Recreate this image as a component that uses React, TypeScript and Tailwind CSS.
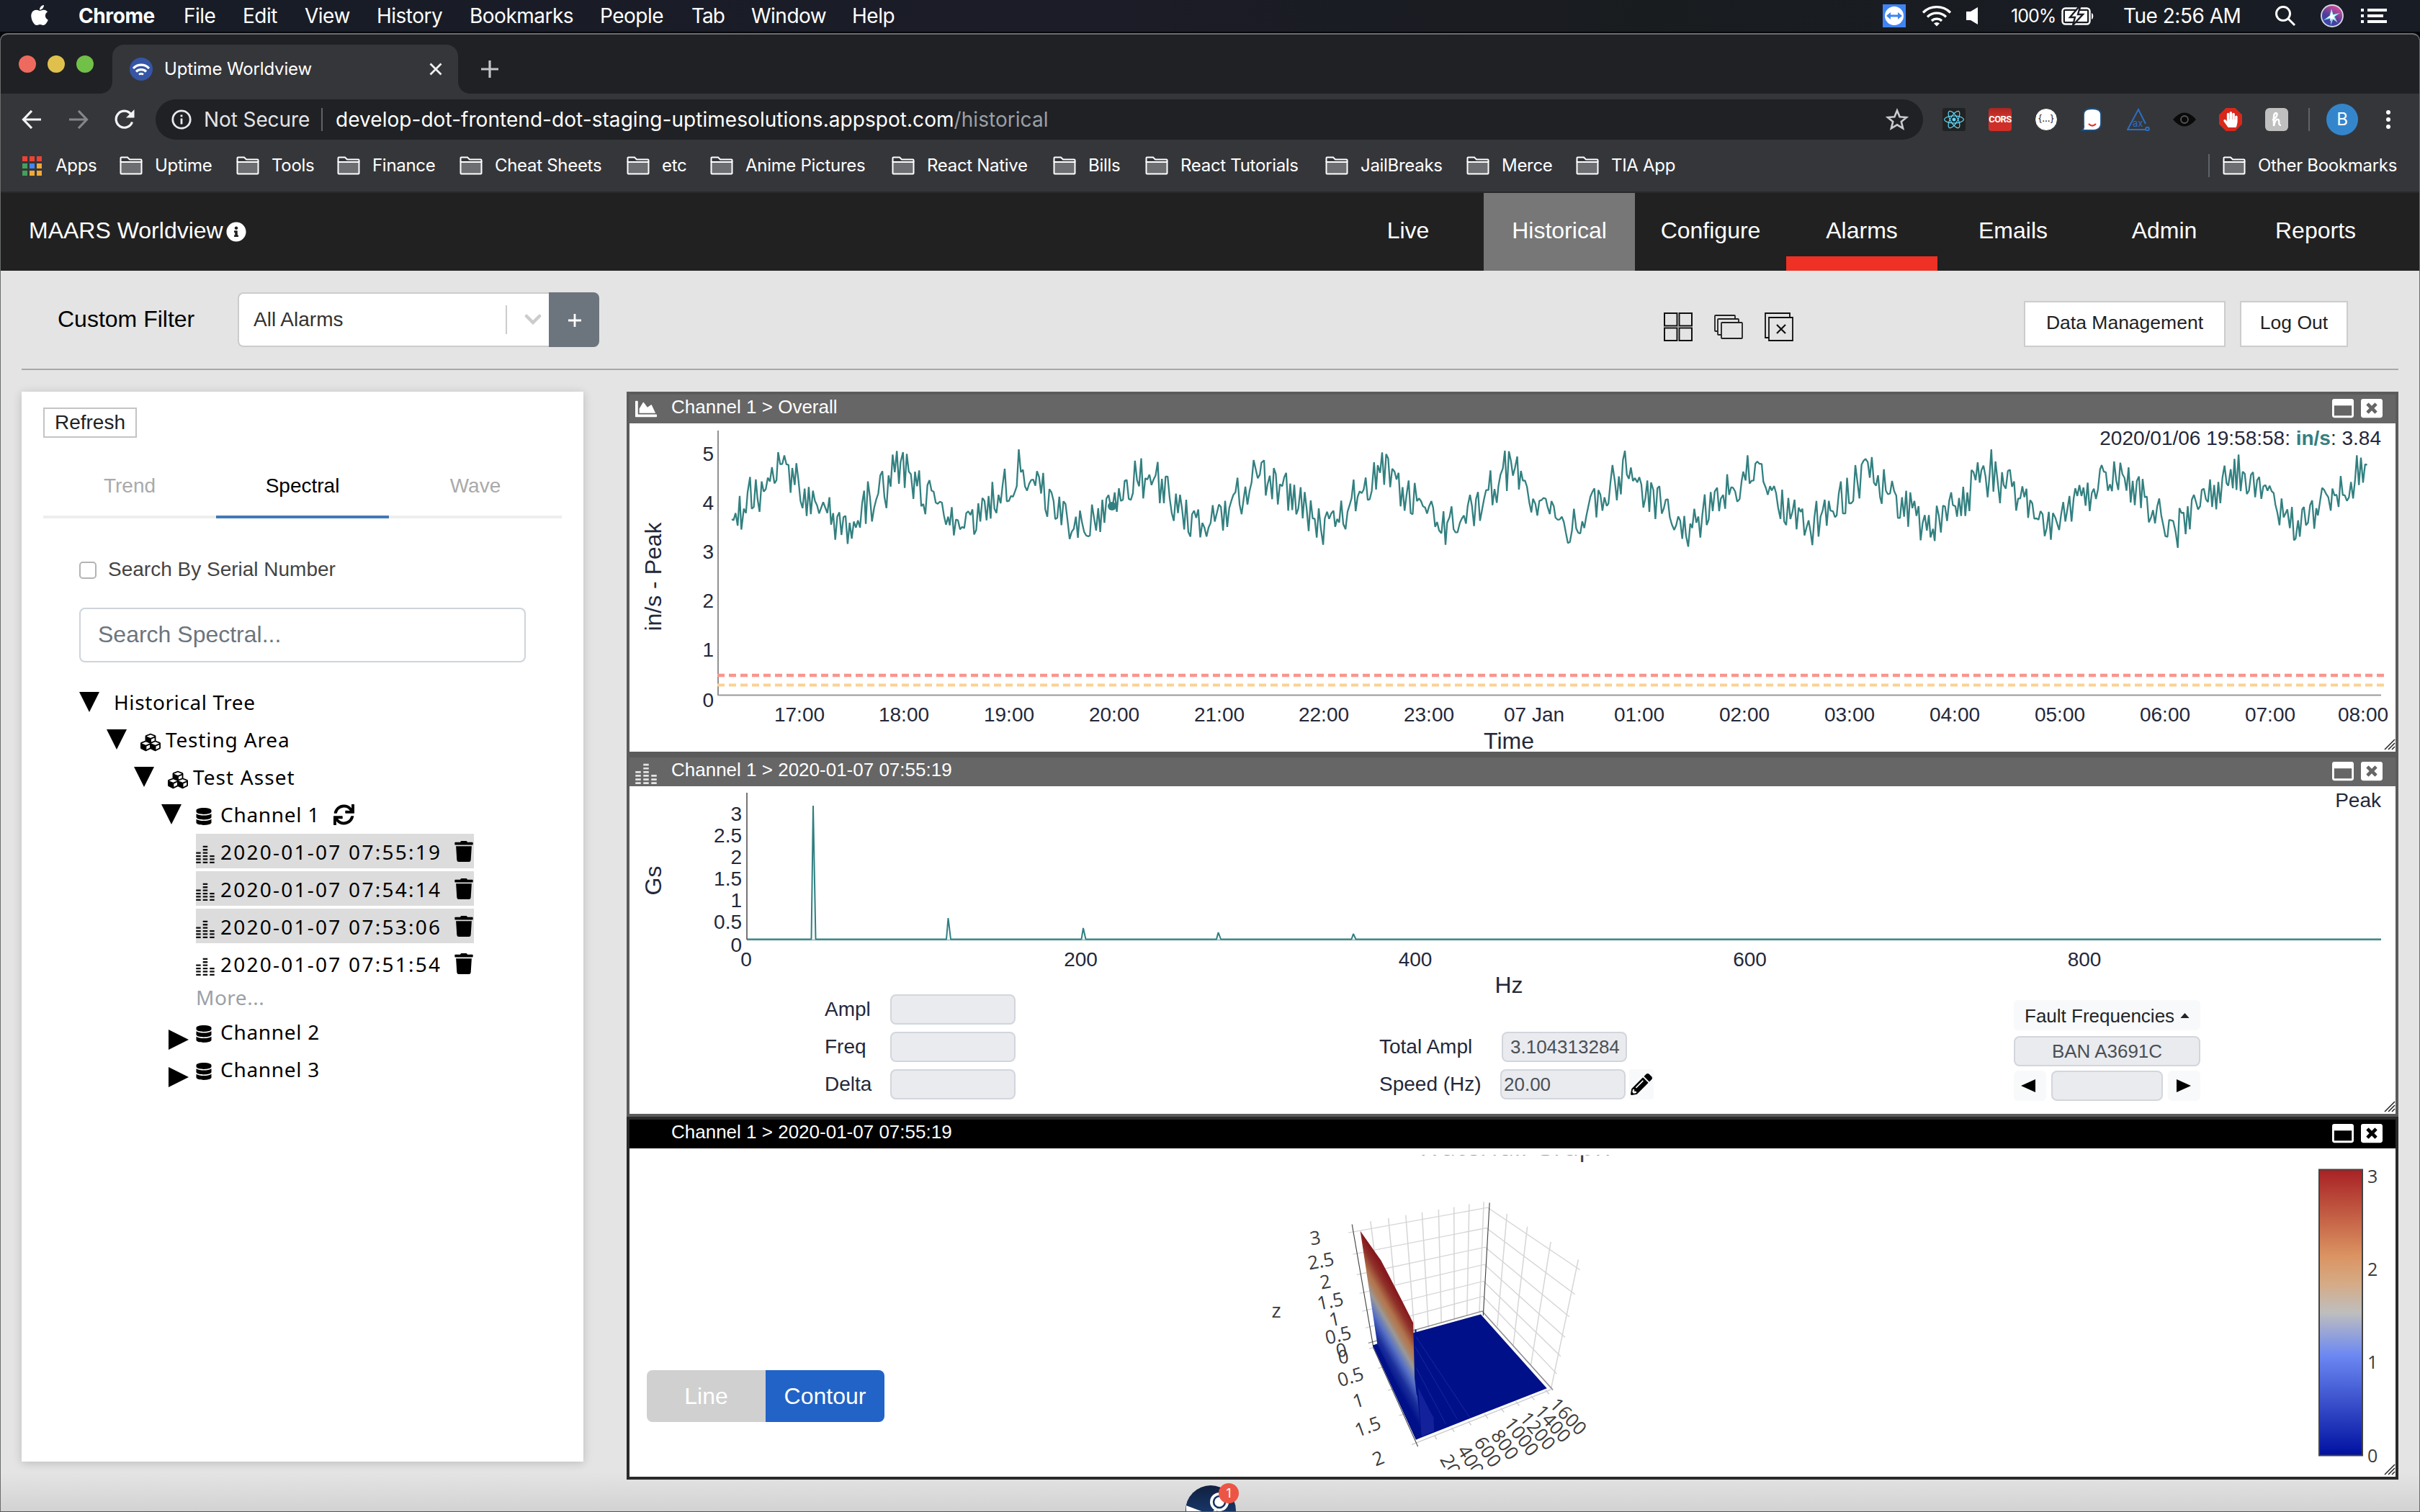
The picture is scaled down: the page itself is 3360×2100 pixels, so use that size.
import React from "react";
import {
  FaApple,
  FaChartArea,
  FaCubes,
  FaDatabase,
  FaHandPaper,
  FaInfoCircle,
  FaPencilAlt,
  FaReact,
  FaRegWindowMaximize,
  FaSync,
  FaTrash,
  FaWindowClose,
} from "react-icons/fa";

/* ---------- data ---------- */

type Batch = { x0: number; y0: number; sx: number; sy: number; raw: string };

const TREND: Batch[] = [
  {
    x0: 860, y0: 530, sx: 1.742, sy: 2.958,
    raw: "272,565 276,570 281,540 286,592 291,470 295,608 301,522 306,540 310,455 316,392 320,522 325,515 330,402 334,480 339,535 344,410 349,452 354,442 359,395 364,410 369,352 375,418 380,405 384,290 389,340 394,338 399,303 404,340 409,342 414,457 418,355 424,425 428,335 433,405 438,490 443,520 448,440 453,552 458,433 463,545 468,448 473,490 478,508 483,542 493,495 503,540 508,475 512,588 517,540 522,650 527,555 532,537 537,630 542,557 547,552 552,667 557,580 562,645 567,575 572,600 577,570 582,600 587,500 592,448 596,585 601,410 606,475 611,575 616,520 621,485 626,460 631,385 636,368 641,475 646,520 651,385 656,432 661,300 666,372 671,285 676,420 680,330 686,290 690,437 695,297 700,370 705,380 711,482 715,370 720,430 725,365 730,512 735,503 740,545 745,425 750,405 755,448 760,452 765,497 770,502 775,493 780,497 785,550 790,588 795,555 799,590 804,516 809,632 814,567 819,570 824,607 829,597 834,602 839,540 844,533 849,548 854,525 858,628 863,610 868,500 873,575 878,478 883,490 888,570 893,470 898,563 902,412 907,522 912,540 917,465 922,500 927,425 932,358 937,492 942,490 947,470 952,473 957,450 961,430 966,278 971,372 976,362 981,430 986,448 991,420 996,404 1001,403 1006,428 1010,368 1015,392 1020,460 1025,375 1030,525 1035,555 1040,442 1045,455 1050,490 1054,565 1059,560 1064,473 1069,590 1074,492 1079,503 1084,572 1089,647 1094,617 1099,605 1104,555 1109,642 1114,530 1119,580 1124,617 1129,632 1134,636 1138,632 1143,505 1148,560 1153,612 1158,520 1163,618 1168,485 1173,580 1178,480 1183,466 1188,510 1193,512 1198,455 1203,535 1208,438 1213,490 1218,485 1222,408 1227,404 1232,482 1237,486 1242,458 1247,325 1252,405 1257,430 1262,315 1267,480 1272,397 1277,402 1282,382 1287,425 1292,402 1297,385 1302,330 1307,500 1312,400 1317,500 1321,390 1326,390 1331,480 1336,540 1341,572 1346,460 1351,540 1356,465 1361,525 1366,608 1371,485 1376,618 1381,637 1385,545 1390,530 1395,560 1400,525 1405,640 1410,580 1415,600 1420,637 1425,600 1430,580 1435,508 1440,575 1445,540 1450,505 1455,515 1460,612 1465,490 1470,597 1475,520 1480,490 1485,465 1490,455 1495,395 1500,505 1505,545 1510,480 1514,432 1519,505 1524,450 1529,415 1534,322 1539,360 1544,397 1549,382",
  },
  {
    x0: 1750, y0: 590, sx: 2.148, sy: 3,
    raw: "3,158 11,148 16,295 21,250 28,212 35,310 40,180 46,205 52,332 58,248 65,256 71,218 77,200 83,358 89,245 95,355 101,250 107,373 113,350 120,260 126,390 132,280 138,350 144,443 150,315 156,390 162,391 168,470 174,348 180,430 187,500 192,390 199,362 205,392 211,370 218,358 223,425 229,392 235,407 241,316 247,413 254,435 260,362 266,335 272,305 278,228 284,360 290,300 296,277 302,285 308,270 314,220 320,313 326,310 332,275 339,156 345,270 350,168 357,200 363,115 369,250 375,122 381,140 387,260 393,183 400,195 406,228 412,200 418,340 424,260 430,358 436,290 442,232 448,368 454,373 460,242 467,318 473,307 479,318 485,340 491,344 497,370 503,340 510,318 515,345 521,425 527,405 533,440 540,452 546,360 552,500 557,408 564,385 570,340 576,435 582,448 588,448 595,408 601,390 607,378 613,412 618,340 625,292 631,340 637,422 643,310 649,280 655,400 661,355 667,310 673,272 680,272 686,190 692,335 698,268 705,325 710,255 716,208 723,182 729,108 735,276 741,110 747,150 753,212 759,180 766,132 771,270 777,192 783,233 789,232 795,258 802,325 808,365 813,308 820,330 826,378 832,317 838,314 844,305 851,308 856,340 863,372 868,318 875,340 880,387 887,396 893,394 899,383 905,405 911,450 917,493 923,488 929,442 935,350 942,432 948,450 954,453 960,402 966,430 972,380 978,340 984,300 990,280 996,265 1002,386 1008,272 1014,292 1020,358 1026,302 1033,338 1038,328 1044,240 1050,168 1057,235 1063,315 1069,215 1075,290 1081,148 1087,108 1093,208 1099,225 1105,178 1111,234 1117,222 1124,240 1130,218 1136,248 1142,345 1148,305 1154,232 1160,363 1165,240 1172,272 1178,393 1184,264 1190,256 1197,370 1203,348 1209,312 1215,310 1221,385 1227,415 1234,438 1240,418 1246,382 1252,400 1258,475 1264,380 1269,460 1276,508 1282,412 1288,430 1294,350 1300,408 1306,382 1312,470 1318,375 1325,290 1331,418 1337,395 1343,280 1349,360 1355,278 1362,262 1368,360 1373,308 1380,292 1386,350 1392,206 1398,292 1404,260 1410,263 1416,278 1422,320 1429,310 1435,235 1440,195 1447,232 1453,127 1459,245 1465,233 1471,232 1476,162 1482,153 1488,162 1495,163 1500,237 1508,265 1513,292 1520,256 1525,274 1532,255 1538,285 1544,345 1551,392 1556,270 1562,403 1568,418",
  },
  {
    x0: 2460, y0: 530, sx: 1.742, sy: 2.958,
    raw: "40,478 45,565 50,535 55,485 60,607 65,518 70,535 74,522 79,632 84,600 89,570 94,620 98,672 103,560 108,490 113,637 118,555 123,530 128,485 133,592 138,490 142,530 148,533 153,557 157,550 162,460 167,410 172,542 178,542 182,395 187,500 192,500 197,490 202,343 207,410 212,480 217,342 222,325 227,318 232,330 237,395 242,310 247,415 252,428 257,385 262,475 266,502 271,360 276,448 281,463 286,460 291,408 296,450 301,468 305,560 310,560 315,475 320,555 325,448 330,597 335,455 340,520 345,490 350,552 355,512 360,652 365,580 370,548 375,612 380,548 384,640 390,605 394,655 399,510 404,550 409,620 414,510 419,513 424,573 429,490 434,455 438,507 444,512 448,555 453,478 458,552 463,432 468,552 473,455 478,532 483,363 488,372 493,405 498,332 503,415 507,365 512,345 517,390 522,475 527,380 531,278 536,452 541,328 547,420 552,500 557,372 561,425 566,440 571,367 576,362 581,432 586,410 591,530 596,480 601,480 606,430 611,475 616,440 620,560 625,487 630,500 635,563 641,562 645,568 650,532 655,545 660,635 665,602 670,535 675,650 680,540 686,560 695,610 700,545 705,495 710,575 715,525 720,470 725,575 730,480 734,438 739,470 744,425 749,470 754,435 759,510 764,415 769,532 774,458 779,440 784,482 789,442 794,360 798,343 803,370 808,372 813,448 818,422 823,450 828,328 833,405 838,445 843,333 848,380 853,395 858,448 863,352 868,497 873,408 878,508 883,408 888,390 893,520 897,400 902,475 907,472 912,578 917,560 922,528 927,582 932,515 937,480 942,550 947,590 952,635 957,638 961,568 966,570 971,573 977,620 982,683 986,520 991,540 996,538 1001,627 1006,512 1011,607 1016,485 1021,465 1026,495 1031,525 1036,512 1040,445 1045,440 1050,483 1055,495 1060,402 1065,515 1070,425 1075,525 1080,412 1085,500 1090,395 1095,345 1100,418 1104,428 1110,360 1115,438 1119,317 1124,445 1129,300 1134,450 1139,370 1144,378 1149,462 1154,448 1159,383 1164,372 1169,475 1174,405 1179,392 1184,482 1189,430 1194,425 1199,448 1204,428 1209,450 1214,458 1218,505 1223,540 1228,590 1233,480 1238,558 1243,540 1247,525 1253,602 1258,515 1263,652 1267,645 1273,570 1277,637 1283,525 1287,515 1292,590 1297,580 1302,508 1307,488 1312,605 1317,520 1321,550 1327,480 1331,437 1336,445 1341,462 1346,475 1352,530 1356,440 1361,468 1366,465 1371,515 1376,388 1381,466 1386,467 1391,490 1396,475 1401,412 1406,480 1411,400 1415,303 1420,425 1425,312 1430,415 1435,340 1440,342",
  },
];

const trendPoints = TREND.map((b) =>
  b.raw
    .split(" ")
    .map((p) => {
      const [x, y] = p.split(",").map(Number);
      return `${(b.x0 + x / b.sx).toFixed(1)},${(b.y0 + y / b.sy).toFixed(1)}`;
    })
    .join(" "),
).join(" ");

const TIME_TICKS: [string, number][] = [
  ["17:00", 1110], ["18:00", 1255], ["19:00", 1401], ["20:00", 1547], ["21:00", 1693],
  ["22:00", 1838], ["23:00", 1984], ["07 Jan", 2130], ["01:00", 2276], ["02:00", 2422],
  ["03:00", 2568], ["04:00", 2714], ["05:00", 2860], ["06:00", 3006], ["07:00", 3152], ["08:00", 3281],
];

const FONT = "'Liberation Sans', Arial, sans-serif";
const PLOT_FONT = "'Open Sans', sans-serif";

/* ---------- macOS menu bar ---------- */

function MenuBar() {
  return (
    <div className="flex h-[46px] shrink-0 items-start border-b-2 border-[#05070b] bg-[linear-gradient(90deg,#171c26_0%,#1b1c27_45%,#191c1f_68%,#181c25_100%)] pl-[40px] text-[28px] leading-[44px] tracking-[-0.5px] text-white">
      <div className="flex h-[44px] w-[69px] items-center">
        <FaApple className="mb-[3px] h-[32px] w-[32px] -translate-x-[1px]" />
      </div>
      <div className="w-[146px] font-bold tracking-[-0.4px]">Chrome</div>
      <div className="w-[82px]">File</div>
      <div className="w-[86px]">Edit</div>
      <div className="w-[100px]">View</div>
      <div className="w-[129px]">History</div>
      <div className="w-[181px]">Bookmarks</div>
      <div className="w-[127px]">People</div>
      <div className="w-[83px] tracking-[-1px]">Tab</div>
      <div className="w-[140px]">Window</div>
      <div className="w-[100px]">Help</div>
      <div className="ml-auto flex h-[44px] items-center pr-[46px]">
        <svg width="32" height="32" viewBox="0 0 32 32">
          <rect width="32" height="32" fill="#3f84f3" />
          <circle cx="16" cy="16" r="13" fill="#fff" />
          <path d="M5 16l6-5v3.500h10V11l6 5-6 5v-3.500H11V21z" fill="#3f84f3" />
        </svg>
        <svg className="ml-[22px]" width="42" height="32" viewBox="0 0 42 32" fill="none" stroke="#fff" strokeWidth="3.200">
          <path d="M2 11.500a27 27 0 0 1 38 0M8 17.500a18.500 18.500 0 0 1 26 0M14 23a10 10 0 0 1 14 0" />
          <path d="M17 26.500a6 6 0 0 1 8 0l-4 4z" fill="#fff" stroke="none" />
        </svg>
        <svg className="ml-[20px]" width="17" height="24" viewBox="0 0 17 24" fill="#fff">
          <path d="M0 6h6l10-6v24l-10-6H0z" />
        </svg>
        <div className="ml-[45px] w-[70px] text-[25px] tracking-[-1px]">100%</div>
        <svg width="46" height="25" viewBox="0 0 46 25" fill="none">
          <rect x="1.500" y="1.500" width="38" height="22" rx="4" stroke="#fff" strokeWidth="2.400" />
          <rect x="5" y="5" width="31" height="15" fill="#fff" />
          <path d="M24 0L12 14h7l-3 11 14-15h-7l3-10z" fill="#fff" stroke="#191c24" strokeWidth="2.400" />
          <path d="M42 8c3 1 3 8 0 9z" fill="#fff" />
        </svg>
        <div className="ml-[40px] w-[210px] tracking-[-0.5px]">Tue 2:56 AM</div>
        <svg width="30" height="30" viewBox="0 0 30 30" fill="none" stroke="#fff" strokeWidth="3">
          <circle cx="12" cy="12" r="9.500" />
          <path d="M19 19l9 9" />
        </svg>
        <svg className="ml-[34px]" width="32" height="32" viewBox="0 0 32 32">
          <defs>
            <linearGradient id="siri" x1="0" y1="1" x2="0.600" y2="0">
              <stop offset="0" stopColor="#2a4fb8" />
              <stop offset="0.500" stopColor="#4c3d9b" />
              <stop offset="1" stopColor="#d64b9a" />
            </linearGradient>
          </defs>
          <circle cx="16" cy="16" r="15" fill="url(#siri)" stroke="#d5d8e0" strokeWidth="1.800" />
          <path d="M15 6l2.500 8L27 12l-7.500 5 4 8.500-6-5L14 29l.5-9.500L4 22l8.500-6z" fill="#8fe6ec" />
          <path d="M15 10l2 5 5-.5-4 3 2 5-4-3-3 4 .5-5-5 .5 5-3.500z" fill="#fff" />
        </svg>
        <svg className="ml-[24px]" width="36" height="22" viewBox="0 0 36 22" fill="#fff">
          <path d="M0 1h4v4H0zM9 1h27v4H9zM0 9h4v4H0zM9 9h22v4H9zM0 17h4v4H0zM9 17h27v4H9z" />
        </svg>
      </div>
    </div>
  );
}

/* ---------- Chrome ---------- */

function TabStrip() {
  return (
    <div className="flex h-[82px] shrink-0 items-end bg-[#202124]">
      <div className="mb-[29px] flex w-[140px] gap-[16px] pl-[26px]">
        <div className="h-6 w-6 rounded-full bg-[#ee6a5f]" />
        <div className="h-6 w-6 rounded-full bg-[#e0c04c]" />
        <div className="h-6 w-6 rounded-full bg-[#71c048]" />
      </div>
      <div className="h-4 w-4 bg-[radial-gradient(circle_at_0_0,transparent_15.500px,#35363a_16px)]" />
      <div className="flex h-[68px] w-[480px] items-center rounded-t-[16px] bg-[#35363a] pr-[22px] pl-[24px]">
        <svg width="32" height="32" viewBox="0 0 32 32" fill="none" stroke="#fff" strokeWidth="3.200">
          <circle cx="16" cy="16" r="16" fill="#3656a5" stroke="none" />
          <path d="M5 15a15 15 0 0 1 22 0M9 19.500a10 10 0 0 1 14 0" />
          <path d="M13 23.500a5 5 0 0 1 6 0" strokeWidth="2.600" />
        </svg>
        <div className="ml-4 flex-1 text-[24px] tracking-[-0.15px] text-white">Uptime Worldview</div>
        <svg width="18" height="18" viewBox="0 0 18 18" stroke="#f1f1f1" strokeWidth="2.800">
          <path d="M1.500 1.500l15 15M16.500 1.500l-15 15" />
        </svg>
      </div>
      <div className="h-4 w-4 bg-[radial-gradient(circle_at_100%_0,transparent_15.500px,#35363a_16px)]" />
      <svg className="mb-[22px] ml-4" width="24" height="24" viewBox="0 0 24 24" stroke="#c4c5c9" strokeWidth="3.200">
        <path d="M12 0v24M0 12h24" />
      </svg>
    </div>
  );
}

function Toolbar() {
  return (
    <div className="flex h-[72px] shrink-0 items-center bg-[#35363a]">
      <svg className="ml-[30px]" width="28" height="26" viewBox="0 0 28 26" fill="none" stroke="#f1f3f4" strokeWidth="3.200">
        <path d="M27 13H3M14 1L2.500 13 14 25" />
      </svg>
      <svg className="ml-[37px]" width="28" height="26" viewBox="0 0 28 26" fill="none" stroke="#85868a" strokeWidth="3.200">
        <path d="M1 13h24M14 1l11.500 12L14 25" />
      </svg>
      <svg className="ml-[36px]" width="28" height="28" viewBox="0 0 28 28" fill="none" stroke="#f1f3f4" strokeWidth="3.200">
        <path d="M24.500 17.500A11.500 11.500 0 1 1 23 7" />
        <path d="M27.500 0v11.500H16z" fill="#f1f3f4" stroke="none" />
      </svg>
      <div className="ml-[29px] flex h-[56px] w-[2454px] items-center rounded-full bg-[#202124] pr-[20px] pl-[22px] text-[28px]">
        <svg width="28" height="28" viewBox="0 0 28 28" fill="none" stroke="#e8eaed" strokeWidth="2.800">
          <circle cx="14" cy="14" r="12.200" />
          <path d="M14 12.500v8M14 7.500v2.800" />
        </svg>
        <div className="ml-[17px] w-[163px] tracking-[-0.1px] whitespace-nowrap text-[#e3e5e8]">Not Secure</div>
        <div className="mr-[18px] h-8 w-[2px] bg-[#5f6368]" />
        <div className="tracking-[0.05px] whitespace-nowrap text-white">
          develop-dot-frontend-dot-staging-uptimesolutions.appspot.com<span className="text-[#9aa0a6]">/historical</span>
        </div>
        <svg className="ml-auto" width="32" height="32" viewBox="0 0 32 32" fill="none" stroke="#c9cbce" strokeWidth="2.600">
          <path d="M16 3.500l3.600 8.800 9.500.700-7.300 6.100 2.300 9.200L16 23.300l-8.100 5 2.300-9.200L2.900 13l9.500-.700z" />
        </svg>
      </div>
      <div className="ml-[27px] flex h-8 w-8 items-center justify-center rounded-[3px] bg-[#222]">
        <FaReact className="h-[28px] w-[28px] text-[#61dafb]" />
      </div>
      <div className="ml-8 flex h-8 w-8 items-center justify-center rounded-[4px] bg-[linear-gradient(180deg,#a82723_0%,#cf2f28_35%,#cf2f28_100%)] font-[Roboto] text-[13px] font-bold tracking-[-0.6px] text-white">CORS</div>
      <div className="ml-8 flex h-8 w-8 items-center justify-center rounded-full border border-[#222] bg-white pb-[2px] text-[13px] text-[#222]">{"{...}"}</div>
      <svg className="ml-8" width="32" height="32" viewBox="0 0 32 32">
        <path d="M4 9q0-8 12-8t12 8v12q0 10-12 10H2q3-3 2-7z" fill="#fff" stroke="#1c4f82" strokeWidth="1.800" />
        <path d="M11 22q5 5 10 0" stroke="#d8352a" strokeWidth="2.200" fill="none" />
      </svg>
      <svg className="ml-8" width="32" height="32" viewBox="0 0 32 32" fill="none" stroke="#2b6fc2" strokeWidth="2">
        <path d="M26 22L16 2 1 30h25" />
        <circle cx="28.500" cy="29" r="2.300" />
        <text x="8" y="25.500" fontSize="13" fill="#2b6fc2" stroke="none">ax</text>
      </svg>
      <svg className="ml-8" width="32" height="20" viewBox="0 0 32 20">
        <path d="M0 10Q16-9 32 10 16 29 0 10z" fill="#0a0a0a" />
        <circle cx="16" cy="10" r="5" fill="none" stroke="#55565a" strokeWidth="1.800" />
      </svg>
      <div className="ml-8 flex h-8 w-8 items-center justify-center bg-[#d8281c] [clip-path:polygon(30%_0,70%_0,100%_30%,100%_70%,70%_100%,30%_100%,0_70%,0_30%)]">
        <FaHandPaper className="h-[22px] w-[22px] text-white" />
      </div>
      <svg className="ml-8" width="32" height="32" viewBox="0 0 32 32">
        <rect width="32" height="32" rx="6" fill="#bfbfc0" />
        <path d="M10 17c7-4 8-10 5-10-4 0-3 8-3 18 1-7 4-10 6-9 3 1-1 8 4 8" fill="none" stroke="#fff" strokeWidth="2.400" />
      </svg>
      <div className="ml-[28px] h-8 w-[2px] bg-[#5f6368]" />
      <div className="ml-[23px] flex h-[44px] w-[44px] items-center justify-center rounded-full bg-[#3486cc] text-[24px] text-white">B</div>
      <div className="ml-[39px] flex flex-col gap-[4px]">
        <div className="h-[6px] w-[6px] rounded-full bg-white" />
        <div className="h-[6px] w-[6px] rounded-full bg-white" />
        <div className="h-[6px] w-[6px] rounded-full bg-white" />
      </div>
    </div>
  );
}

function Folder() {
  return (
    <svg className="mr-[17px] shrink-0" width="32" height="26" viewBox="0 0 32 26" fill="none" stroke="#fff" strokeWidth="2">
      <path d="M1.500 8h29v15.500q0 1-1 1h-27q-1 0-1-1z" fill="#6d6e71" />
      <path d="M1.500 8V2.500q0-1 1-1h8.500l3 3h15.500q1 0 1 1V8" />
    </svg>
  );
}

function Bookmark({ label, width }: { label: string; width: string }) {
  return (
    <div className={`flex shrink-0 items-center whitespace-nowrap ${width}`}>
      <Folder />
      {label}
    </div>
  );
}

function BookmarksBar() {
  return (
    <div className="flex h-[66px] shrink-0 items-center border-b-2 border-[#28292b] bg-[#35363a] pb-2 text-[24px] tracking-[-0.3px] text-white">
      <div className="ml-[31px] grid w-[46px] grid-cols-[7px_7px_7px] gap-[3px]">
        <div className="h-[7px] bg-[#ea4335]" />
        <div className="h-[7px] bg-[#ea4335]" />
        <div className="h-[7px] bg-[#ea4335]" />
        <div className="h-[7px] bg-[#43a05a]" />
        <div className="h-[7px] bg-[#4285f4]" />
        <div className="h-[7px] bg-[#f0a934]" />
        <div className="h-[7px] bg-[#43a05a]" />
        <div className="h-[7px] bg-[#f0a934]" />
        <div className="h-[7px] bg-[#f0a934]" />
      </div>
      <div className="w-[89px]">Apps</div>
      <Bookmark label="Uptime" width="w-[162px]" />
      <Bookmark label="Tools" width="w-[140px]" />
      <Bookmark label="Finance" width="w-[170px]" />
      <Bookmark label="Cheat Sheets" width="w-[232px]" />
      <Bookmark label="etc" width="w-[116px]" />
      <Bookmark label="Anime Pictures" width="w-[252px]" />
      <Bookmark label="React Native" width="w-[224px]" />
      <Bookmark label="Bills" width="w-[128px]" />
      <Bookmark label="React Tutorials" width="w-[250px]" />
      <Bookmark label="JailBreaks" width="w-[196px]" />
      <Bookmark label="Merce" width="w-[152px]" />
      <Bookmark label="TIA App" width="w-[160px]" />
      <div className="ml-auto h-8 w-[2px] bg-[#5f6368]" />
      <div className="ml-[18px]">
        <Bookmark label="Other Bookmarks" width="w-[274px]" />
      </div>
    </div>
  );
}

/* ---------- App header and filter row ---------- */

function Header() {
  const cell = "flex h-full w-[210px] items-center justify-center pb-[4px]";
  return (
    <div className="flex h-[108px] shrink-0 items-center bg-[#212121] pr-[40px] pl-[40px] text-[32px] text-white">
      <div className="flex items-center pb-[4px]">
        MAARS Worldview
        <FaInfoCircle className="mt-[3px] ml-[4px] h-[28px] w-[28px]" />
      </div>
      <div className="ml-auto flex h-full">
        <div className={cell}>Live</div>
        <div className={`${cell} bg-[#777]`}>Historical</div>
        <div className={cell}>Configure</div>
        <div className="flex h-full w-[210px] items-center justify-center border-b-[20px] border-[#ee3124] pt-[16px]">Alarms</div>
        <div className={cell}>Emails</div>
        <div className={cell}>Admin</div>
        <div className={cell}>Reports</div>
      </div>
    </div>
  );
}

function FilterBar() {
  return (
    <div className="mx-[30px] flex h-[138px] shrink-0 items-start border-b-2 border-[#a8a8a8] pt-[30px]">
      <div className="w-[250px] pl-[50px] text-[32px] leading-[74px] whitespace-nowrap text-black">Custom Filter</div>
      <div className="ml-[50px] flex h-[76px] w-[432px] items-center rounded-l-[8px] border-2 border-r-0 border-[#ccc] bg-white">
        <div className="flex-1 pl-[20px] text-[28px] text-[#333]">All Alarms</div>
        <div className="h-[40px] w-[2px] bg-[#ccc]" />
        <svg className="mr-[10px] ml-[24px]" width="24" height="16" viewBox="0 0 24 16" fill="none" stroke="#ccc" strokeWidth="4.500" strokeLinecap="round">
          <path d="M3 3l9 9 9-9" />
        </svg>
      </div>
      <div className="flex h-[76px] w-[70px] items-center justify-center rounded-r-[8px] bg-[#6c757d] text-white">
        <svg className="mt-[2px] ml-[2px]" width="18" height="18" viewBox="0 0 18 18" stroke="#fff" strokeWidth="2.800">
          <path d="M9 0v18M0 9h18" />
        </svg>
      </div>
      <div className="mt-[28px] ml-auto flex items-start gap-[30px]">
        <svg width="40" height="40" viewBox="0 0 40 40" fill="none" stroke="#111" strokeWidth="2">
          <path d="M1 1h17.500v17.500H1zM21.500 1H39v17.500H21.500zM1 21.500h17.500V39H1zM21.500 21.500H39V39H21.500z" />
          <path d="M0 20h40M20 0v40" stroke="#999" strokeWidth="1" />
        </svg>
        <svg className="mt-[3px]" width="40" height="34" viewBox="0 0 40 34" fill="#e4e4e4" stroke="#222" strokeWidth="1.800">
          <rect x="1" y="1" width="28" height="22" rx="1" />
          <rect x="5" y="6" width="29" height="22" rx="1" />
          <rect x="10" y="11" width="29" height="22" rx="1" />
        </svg>
        <svg width="40" height="40" viewBox="0 0 40 40" fill="#e4e4e4" stroke="#111" strokeWidth="1.800">
          <path d="M1 1h34v34H1z" />
          <path d="M6 7h33v32H6z" />
          <path d="M17 17l12 12M29 17l-12 12" strokeWidth="2.200" />
        </svg>
      </div>
      <div className="mt-[12px] ml-[320px] flex h-[64px] w-[280px] items-center justify-center border-2 border-[#ccc] bg-white pb-[3px] text-[26.500px] text-[#222]">Data Management</div>
      <div className="mt-[12px] mr-[70px] ml-[20px] flex h-[64px] w-[150px] items-center justify-center border-2 border-[#ccc] bg-white pb-[3px] text-[26.500px] text-[#222]">Log Out</div>
    </div>
  );
}

/* ---------- Sidebar ---------- */

function SpectrumBars({ className, color }: { className: string; color: string }) {
  return (
    <svg className={className} viewBox="0 0 30 29" fill="none" stroke={color} strokeWidth="7.500">
      <path d="M4 29V10M15 29V0M26 29V15" strokeDasharray="2.700 2.400" />
    </svg>
  );
}

function Down() {
  return (
    <svg width="28" height="28" viewBox="0 0 28 28">
      <path d="M0 0h28L14 28z" />
    </svg>
  );
}

function Leaf({ label, selected }: { label: string; selected?: boolean }) {
  return (
    <div className={`mb-[4px] ml-[242px] flex h-[48px] w-[386px] items-center ${selected ? "bg-[#dcdcdc]" : ""}`}>
      <SpectrumBars className="mt-[8px] h-[25px] w-[26px]" color="#111" />
      <div className="mt-[2px] ml-[8px] w-[325px] text-[28px] tracking-[2.25px] whitespace-nowrap">{label}</div>
      <FaTrash className="h-[29px] w-[28px] shrink-0" />
    </div>
  );
}

function Closed({ label }: { label: string }) {
  return (
    <div className="flex h-[52px] items-center pl-[204px]">
      <svg className="mt-[20px]" width="28" height="28" viewBox="0 0 28 28">
        <path d="M0 0v28l28-14z" />
      </svg>
      <FaDatabase className="mt-[3px] ml-[9px] h-[24px] w-[24px]" />
      <div className="-mt-[3px] ml-[11px] tracking-[0.7px]">{label}</div>
    </div>
  );
}

function Sidebar() {
  return (
    <div className="flex h-[1486px] w-[780px] shrink-0 flex-col bg-white shadow-[0_2px_12px_rgba(0,0,0,0.18)]">
      <div className="mt-[22px] ml-[30px] flex h-[42px] w-[130px] items-center justify-center border-2 border-[#c4c4c4] text-[28px] text-[#222]">Refresh</div>
      <div className="mx-[30px] mt-[24px] flex h-[88px] text-[28px]">
        <div className="w-[240px] border-b-4 border-[#eee] pt-[22px] text-center text-[#aaa]">Trend</div>
        <div className="w-[240px] border-b-4 border-[#4379b5] pt-[22px] text-center text-black">Spectral</div>
        <div className="w-[240px] border-b-4 border-[#eee] pt-[22px] text-center text-[#aaa]">Wave</div>
      </div>
      <div className="mt-[50px] ml-[80px] flex h-[44px] items-center text-[28px] text-[#444]">
        <div className="h-[24px] w-[24px] rounded-[5px] border-2 border-[#b3b3b3] bg-white" />
        <div className="mb-[2px] ml-[16px]">Search By Serial Number</div>
      </div>
      <div className="mt-[30px] ml-[80px] flex h-[76px] w-[620px] items-center rounded-[8px] border-2 border-[#ced4da] pb-[2px] pl-[24px] text-[32px] text-[#6c757d]">Search Spectral...</div>
      <div className="mt-[29px] font-['Noto_Sans'] text-[28px] whitespace-nowrap text-black">
        <div className="flex h-[52px] items-center pl-[80px]">
          <Down />
          <div className="ml-[20px] tracking-[0.6px]">Historical Tree</div>
        </div>
        <div className="flex h-[52px] items-center pl-[118px]">
          <Down />
          <FaCubes className="mt-[7px] ml-[19px] h-[28px] w-[28px]" />
          <div className="ml-[7px] tracking-[0.85px]">Testing Area</div>
        </div>
        <div className="flex h-[52px] items-center pl-[156px]">
          <Down />
          <FaCubes className="mt-[7px] ml-[19px] h-[28px] w-[28px]" />
          <div className="ml-[7px] tracking-[1.1px]">Test Asset</div>
        </div>
        <div className="mb-[1px] flex h-[52px] items-center pl-[194px]">
          <Down />
          <FaDatabase className="mt-[6px] ml-[19px] h-[24px] w-[24px]" />
          <div className="ml-[11px] w-[157px] tracking-[0.7px]">Channel 1</div>
          <FaSync className="h-[29px] w-[29px]" />
        </div>
        <Leaf label="2020-01-07 07:55:19" selected />
        <Leaf label="2020-01-07 07:54:14" selected />
        <Leaf label="2020-01-07 07:53:06" selected />
        <Leaf label="2020-01-07 07:51:54" />
        <div className="flex h-[42px] items-center pb-[4px] pl-[242px] tracking-[0.5px] text-[#9aa1a8]">More...</div>
        <Closed label="Channel 2" />
        <Closed label="Channel 3" />
      </div>
    </div>
  );
}

/* ---------- Panels ---------- */

function Panel({ title, icon, tone, children }: { title: string; icon?: React.ReactNode; tone: "gray" | "black"; children: React.ReactNode }) {
  const black = tone === "black";
  return (
    <div className={`flex h-[503.500px] w-full flex-col border-4 bg-white ${black ? "border-[#2a2a2a]" : "border-[#5b5b5b]"}`}>
      <div className={`flex h-[40px] shrink-0 items-center pr-[18px] text-[26px] text-white ${black ? "bg-black" : "bg-[#666]"}`}>
        <div className="flex h-full w-[58px] items-center pl-[8px]">{icon}</div>
        <div className="flex-1 pb-[5px] whitespace-nowrap">{title}</div>
        <FaRegWindowMaximize className="mr-[10px] mb-[2px] h-[30px] w-[30px]" />
        <FaWindowClose className="mb-[2px] h-[30px] w-[30px]" />
      </div>
      <div className="relative min-h-0 flex-1">
        {children}
        <svg className="absolute right-0 bottom-[2px]" width="16" height="16" viewBox="0 0 16 16" stroke="#222" strokeWidth="1.500">
          <path d="M1 15L15 1M6 15l9-9M11 15l4-4" />
        </svg>
      </div>
    </div>
  );
}

function TrendChart() {
  return (
    <svg className="block overflow-visible" width="2452" height="450" viewBox="874 588 2452 450" fontFamily={FONT} fontSize="28" fill="#24283a">
      {[5, 4, 3, 2, 1].map((n) => (
        <text key={n} x="991" y={640 + (5 - n) * 68} textAnchor="end">{n}</text>
      ))}
      <text x="991" y="982" textAnchor="end">0</text>
      {TIME_TICKS.map(([t, x]) => (
        <text key={t} x={x} y="1002" textAnchor="middle">{t}</text>
      ))}
      <text x="2095" y="1040" textAnchor="middle" fontSize="32">Time</text>
      <text transform="translate(918 801) rotate(-90)" textAnchor="middle" fontSize="32">in/s - Peak</text>
      <text x="3306" y="618" textAnchor="end">
        2020/01/06 19:58:58: <tspan fontWeight="bold" fill="#338080">in/s</tspan>: 3.84
      </text>
      <path d="M997 598v368" stroke="#777" strokeWidth="1.600" />
      <path d="M997 965.500h2309" stroke="#999" strokeWidth="2" />
      <path d="M996 938h2315" stroke="#f9958e" strokeWidth="4.500" strokeDasharray="10 6" />
      <path d="M996 951.500h2315" stroke="#fbd194" strokeWidth="4" strokeDasharray="10 6" />
      <polyline points={trendPoints} fill="none" stroke="#338080" strokeWidth="2.300" strokeLinejoin="bevel" />
      <circle cx="1544" cy="703" r="6" fill="#338080" />
    </svg>
  );
}

const PEAKS: [number, number][] = [[1129.5, 1119], [1317, 1275], [1504.5, 1289], [1692, 1295], [1879.5, 1297]];
const spectrumPath =
  "M1037 1304.500" + PEAKS.map(([x, y]) => `H${x - 3}L${x - 0.5} ${y}L${x + 3} 1304.500`).join("") + "H3306";

function SpectrumChart() {
  const ys: [string, number][] = [["3", 1139.5], ["2.5", 1169.5], ["2", 1199.5], ["1.5", 1229.5], ["1", 1259.5], ["0.5", 1289.5], ["0", 1322]];
  const xs: [string, number][] = [["0", 1036], ["200", 1500.5], ["400", 1965], ["600", 2429.5], ["800", 2894]];
  return (
    <svg className="block overflow-visible" width="2452" height="289" viewBox="874 1092 2452 289" fontFamily={FONT} fontSize="28" fill="#24283a">
      {ys.map(([t, y]) => (
        <text key={t} x="1030" y={y} textAnchor="end">{t}</text>
      ))}
      {xs.map(([t, x]) => (
        <text key={t} x={x} y="1342" textAnchor="middle">{t}</text>
      ))}
      <text x="2095" y="1379" textAnchor="middle" fontSize="32">Hz</text>
      <text transform="translate(918 1223) rotate(-90)" textAnchor="middle" fontSize="32">Gs</text>
      <text x="3306" y="1121" textAnchor="end">Peak</text>
      <path d="M1037 1101v204" stroke="#666" strokeWidth="1.800" />
      <path d="M1037 1305.500h2269" stroke="#8fb3b3" strokeWidth="1.500" />
      <path d={spectrumPath} fill="none" stroke="#2f7f80" strokeWidth="2" strokeLinejoin="bevel" />
    </svg>
  );
}

const FIELD = "flex h-[42px] items-center rounded-[8px] border-2 border-[#d2d6dc] bg-[#eaebef] text-[26px] text-[#495057]";

function SpectrumReadouts() {
  return (
    <div className="flex items-start text-[28px] leading-[42px] text-[#24283a]">
      <div className="ml-[271px] grid grid-cols-[91px_174px] gap-y-[10px]">
        <div>Ampl</div>
        <div className={FIELD} />
        <div>Freq</div>
        <div className={FIELD} />
        <div>Delta</div>
        <div className={FIELD} />
      </div>
      <div className="mt-[52px] ml-[505px] grid grid-cols-[168px_174px_40px] gap-y-[10px] whitespace-nowrap">
        <div>Total Ampl</div>
        <div className={`${FIELD} ml-[2px] -mr-[2px] pl-[10px]`}>3.104313284</div>
        <div />
        <div>Speed (Hz)</div>
        <div className={`${FIELD} pl-[3px]`}>20.00</div>
        <div className="ml-[5px] flex w-[34px] items-center justify-center rounded-[4px] bg-[#f8f9fa]">
          <FaPencilAlt className="h-[30px] w-[30px] text-black" />
        </div>
      </div>
      <div className="mt-[8px] ml-[499px] flex w-[259px] flex-col text-[26px]">
        <div className="flex h-[42px] items-center rounded-[6px] bg-[#f8f9fa] pt-[2px] pl-[15px] whitespace-nowrap text-[#212529]">
          Fault Frequencies
          <svg className="ml-[8px]" width="13" height="7" viewBox="0 0 14 8" fill="#212529">
            <path d="M0 8h14L7 0z" />
          </svg>
        </div>
        <div className={`${FIELD} mt-[8px] justify-center`}>BAN A3691C</div>
        <div className="mt-[6px] flex justify-between">
          <div className="flex h-[42px] w-[45px] items-center rounded-[6px] bg-[#f8f9fa] pl-[10px]">
            <svg width="20" height="18" viewBox="0 0 20 18"><path d="M20 0v18L0 9z" /></svg>
          </div>
          <div className={`${FIELD} w-[155px]`} />
          <div className="flex h-[42px] w-[45px] items-center rounded-[6px] bg-[#f8f9fa] pl-[12px]">
            <svg width="20" height="18" viewBox="0 0 20 18"><path d="M0 0v18l20-9z" /></svg>
          </div>
        </div>
      </div>
    </div>
  );
}

const Z_LABELS: [string, number, number, number][] = [
  ["3", 1826, 1719, -8], ["2.5", 1834, 1751, -11], ["2", 1840, 1780, -11], ["1.5", 1847, 1807, -12],
  ["1", 1853, 1832, -12], ["0.5", 1858, 1854, -13], ["0", 1862.5, 1875, -12], ["0", 1865, 1884, -8],
  ["0.5", 1875, 1912, -17], ["1", 1886, 1945, -17], ["1.5", 1899, 1981, -20], ["2", 1913.5, 2025, -22],
];
const X_LABELS: [string, number, number, number][] = [
  ["1600", 2177.5, 1967, 46], ["1400", 2156, 1977, 48], ["1200", 2135, 1987, 50], ["1000", 2112.5, 1995, 52],
  ["800", 2089.5, 2006, 54], ["600", 2065.5, 2016, 56], ["400", 2042, 2028, 58], ["200", 2017.5, 2041, 60],
];

function Waterfall() {
  return (
    <svg className="block" width="2452" height="456" viewBox="874 1594.500 2452 456" fontFamily={PLOT_FONT} fill="#3c3c3c">
      <defs>
        <linearGradient id="bar" x1="0" y1="1" x2="0" y2="0">
          <stop offset="0" stopColor="#0010a0" />
          <stop offset="0.350" stopColor="#6c88f2" />
          <stop offset="0.500" stopColor="#bebebe" />
          <stop offset="0.600" stopColor="#d5ab86" />
          <stop offset="0.700" stopColor="#db9361" />
          <stop offset="1" stopColor="#a82124" />
        </linearGradient>
        <linearGradient id="ridge" gradientUnits="userSpaceOnUse" x1="493" y1="388" x2="338" y2="466">
          <stop offset="0" stopColor="#861a1e" />
          <stop offset="0.120" stopColor="#8f3029" />
          <stop offset="0.300" stopColor="#b1744c" />
          <stop offset="0.400" stopColor="#ac8468" />
          <stop offset="0.480" stopColor="#999" />
          <stop offset="0.640" stopColor="#5670c6" />
          <stop offset="0.820" stopColor="#1c309c" />
          <stop offset="1" stopColor="#001088" />
        </linearGradient>
        <clipPath id="plotArea">
          <rect x="874" y="1604" width="2452" height="436.500" />
        </clipPath>
      </defs>
      <g transform="translate(1700 1580) scale(0.3827 0.3333)" fill="none" stroke="#d6d6d6" strokeWidth="4">
        <path d="M530 347L585 850M595 334L635 835M658 322L690 818M717 310L740 790M777 298L787 770M833 288L834 757M888 276L880 742M941 266L925 728" />
        <path d="M450 395L955 290L1290 550M466 485L950 375L1272 652M480 570L946 455L1251 745M490 648L943 527L1236 831M500 722L940 597L1220 910M512 792L938 660L1206 983" />
        <path d="M1025 316L990 785M1099 370L1048 865M1184 433L1112 945M1284 507L1185 1045" />
        <path d="M680 1278L1185 1048M762 1238l8 18M824 1207l10 18M885 1180l10 17M944 1150l12 19M1002 1125l12 18M1057 1098l13 18M1112 1075l13 17M1165 1050l13 17M525 878l20-5M558 960l18-5M594 1052l18-6M634 1157l20-7" stroke="#ccc" />
        <path d="M522 855L935 722L1192 1050" stroke="#8c8c8c" />
        <path d="M463 360L541 875L702 1286M962 270L939 740" stroke="#444" strokeWidth="3" />
        <path d="M538 864L555 857L690 811L930 735L1170 1043L695 1257z" fill="#001088" stroke="none" />
        <path d="M695 828L890 1165M692 870L845 1172M697 960L803 1192M703 1050L760 1220M705 1060L760 1170" stroke="#14249a" strokeWidth="3" />
        <path d="M703 1040L759 1168L761 1222L715 1245z" fill="#13229a" stroke="none" />
        <path d="M493 388L568 510L600 580L640 668L685 770L690 1000L715 1245L708 1215L555 860z" fill="url(#ridge)" stroke="none" />
        <path d="M555 860L540 866L695 1257L716 1246z" fill="#001088" stroke="none" />
        <path d="M555 857L590 870L700 1075L715 1246z" fill="url(#ridge)" stroke="none" />
        <path d="M694 798v30" stroke="#001088" strokeWidth="5" />
      </g>
      <g clipPath="url(#plotArea)" textAnchor="middle" fontSize="26">
        <text x="2102" y="1604.500" fontSize="36.500">Waterfall Graph</text>
        <text x="1772" y="1829" fontSize="28">z</text>
        {[...Z_LABELS, ...X_LABELS].map(([t, x, y, r]) => (
          <text key={`${t}-${x}`} transform={`translate(${x} ${y}) rotate(${r})`} y="9">{t}</text>
        ))}
      </g>
      <rect x="3220" y="1624" width="60" height="397" fill="url(#bar)" stroke="#444" strokeWidth="2" />
      <g fontSize="25">
        <text x="3287" y="1642">3</text>
        <text x="3287" y="1771">2</text>
        <text x="3287" y="1900">1</text>
        <text x="3287" y="2030">0</text>
      </g>
    </svg>
  );
}

export default function App() {
  return (
    <div className="relative flex h-[2100px] w-[3360px] flex-col overflow-hidden bg-[#05070b] font-['Liberation_Sans',Arial,sans-serif]">
      <div className="font-[Inter,sans-serif]">
        <MenuBar />
      </div>
      <div className="flex h-[2054px] flex-col overflow-hidden rounded-t-[10px] border-x border-t-2 border-[#6b6c6c] bg-[#e4e4e4]">
        <div className="-mx-px flex shrink-0 flex-col font-[Inter,sans-serif]">
          <TabStrip />
          <Toolbar />
          <BookmarksBar />
        </div>
        <div className="-mx-px flex flex-1 flex-col bg-[linear-gradient(180deg,#e4e4e4_97%,#d2d2d2_100%)]">
          <Header />
          <FilterBar />
          <div className="flex pt-[30px] pl-[30px]">
            <Sidebar />
            <div className="ml-[60px] flex w-[2460px] flex-col">
              <Panel title="Channel 1 > Overall" tone="gray" icon={<FaChartArea className="h-[30px] w-[30px]" />}>
                <TrendChart />
              </Panel>
              <Panel title="Channel 1 > 2020-01-07 07:55:19" tone="gray" icon={<SpectrumBars className="mt-[6px] h-[29px] w-[30px]" color="#e4e4e4" />}>
                <SpectrumChart />
                <SpectrumReadouts />
              </Panel>
              <Panel title="Channel 1 > 2020-01-07 07:55:19" tone="black">
                <Waterfall />
                <div className="absolute top-[308px] left-[24px] flex h-[72px] w-[330px] overflow-hidden rounded-[8px] text-[32px] text-white">
                  <div className="flex w-1/2 items-center justify-center bg-[#d0d0d0]">Line</div>
                  <div className="flex w-1/2 items-center justify-center bg-[#2163c6]">Contour</div>
                </div>
              </Panel>
            </div>
          </div>
        </div>
      </div>
      <svg className="absolute bottom-0 left-[1640px]" width="90" height="44" viewBox="1640 2056 90 44">
        <defs>
          <linearGradient id="dock" x1="0" y1="0" x2="0" y2="1">
            <stop offset="0" stopColor="#10203f" />
            <stop offset="1" stopColor="#1f4a8c" />
          </linearGradient>
        </defs>
        <circle cx="1681" cy="2098" r="35" fill="url(#dock)" />
        <path d="M1647 2091l32 12 10-8v10h-42z" fill="#fff" />
        <circle cx="1693" cy="2086" r="13" fill="#fff" />
        <circle cx="1693" cy="2086" r="8" fill="none" stroke="#16305e" strokeWidth="2.500" />
        <circle cx="1706" cy="2074" r="14" fill="#ec5545" />
        <text x="1706" y="2080" fontSize="17" fill="#fff" textAnchor="middle" fontFamily="Inter, sans-serif">1</text>
      </svg>
      <div className="absolute bottom-0 left-0 h-px w-full bg-[#555]" />
    </div>
  );
}
